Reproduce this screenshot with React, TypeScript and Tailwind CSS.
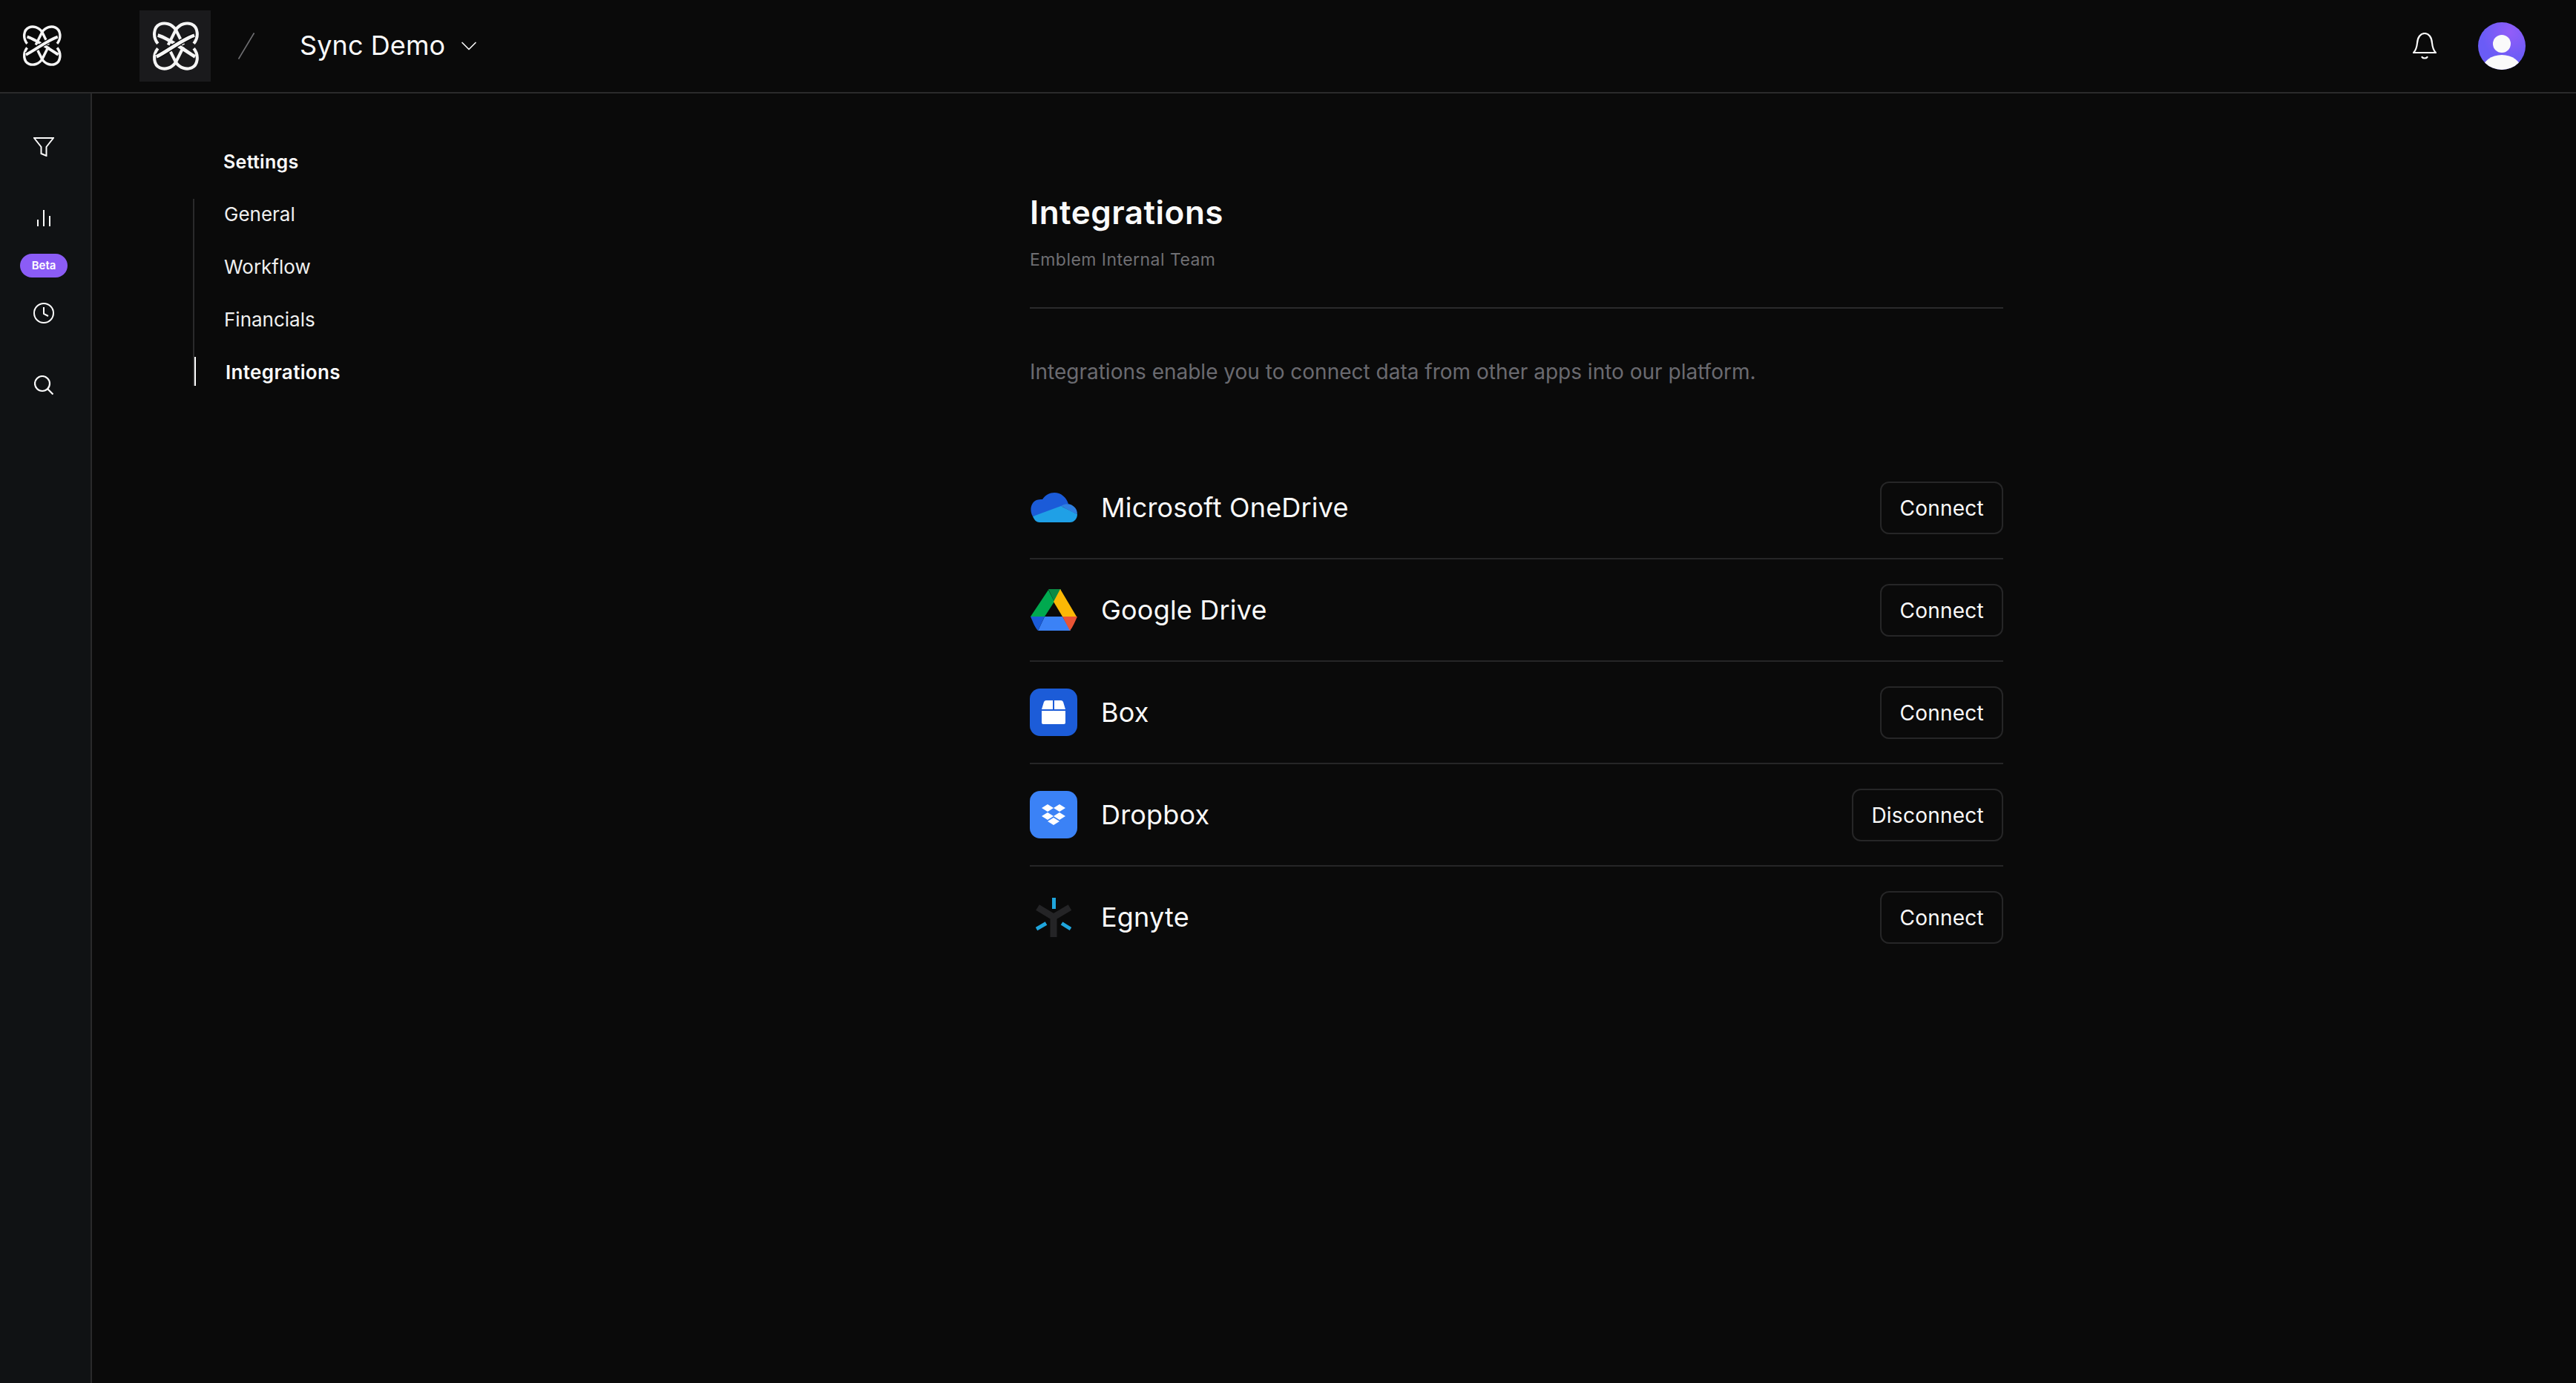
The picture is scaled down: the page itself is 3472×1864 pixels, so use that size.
import { ReactNode } from "react"
import { ChevronDown } from "lucide-react"

function Logo({ className }: { className: string }) {
	const strands = (
		<>
			<path d="M33 10C27 1 17-1 10 2C1 6-1 20 7 30" />
			<path d="M33 10L22 32" />
		</>
	)
	return (
		<svg viewBox="-2 -2 68 72" className={className} fill="none" stroke="#f5f5f5" strokeWidth="4.4">
			<g>{strands}</g>
			<g transform="matrix(-1 0 0 1 66 0)">{strands}</g>
			<g transform="matrix(1 0 0 -1 0 67)">{strands}</g>
			<g transform="matrix(-1 0 0 -1 66 67)">{strands}</g>
			<path d="M7 18C22 22 46 40 61 49" strokeWidth="5" />
			<path d="M60 18C42 24 20 42 5 49" stroke="#0a0a0a" strokeWidth="8" />
			<path d="M60 18C42 24 20 42 5 49" strokeWidth="5" />
		</svg>
	)
}

function OneDriveIcon() {
	return (
		<svg viewBox="0 0 63 40" className="h-[40px] w-[63px]">
			<path fill="#1b5bd8" d="M3 32C-1 26-1 14 8 10C11 9 13 9 16 9C20 3 26 0 32 0C41 0 48 6 51 15L30 26Z" />
			<path fill="#1fa0e6" d="M3 32L41 18L63 29C63 35 59 40 53 40L12 40C8 40 5 37 3 32Z" />
			<path fill="#2f7fe0" d="M41 18C45 15 52 14 56 17C61 20 63 24 63 29C57 27 49 22 41 18Z" />
		</svg>
	)
}

function DriveIcon() {
	return (
		<svg viewBox="0 0 63 56" className="h-[56px] w-[63px]">
			<path fill="#00a94f" d="M24 1L32 17L19 37L0 37Z" />
			<path fill="#0b8a45" d="M24 0L41 0L32 17Z" />
			<path fill="#fbb805" d="M40 0L62 37L43 37L31 17Z" />
			<path fill="#3b82f6" d="M19 37L43 37L54 56L10 56Z" />
			<path fill="#1b5bd8" d="M0 37L19 37L10 56C6 52 3 44 0 37Z" />
			<path fill="#ea5435" d="M43 37L63 37C60 44 57 51 53 56Z" />
		</svg>
	)
}

function BoxIcon() {
	return (
		<svg viewBox="0 0 64 64" className="h-[64px] w-[64px]">
			<rect width="64" height="64" rx="14" fill="#1c5cd8" />
			<path fill="#fff" d="M19 18Q20 16 22 16L31 16L31 28L16 28ZM33 16L42 16Q44 16 45 18L48 28L33 28ZM16 30L48 30L48 46Q48 48 46 48L18 48Q16 48 16 46Z" />
		</svg>
	)
}

function DropboxIcon() {
	return (
		<svg viewBox="0 0 64 64" className="h-[64px] w-[64px]">
			<rect width="64" height="64" rx="14" fill="#3b82f6" />
			<path fill="#fff" d="M16 23L24 18L32 23L24 28ZM32 23L40 18L48 23L40 28ZM16 34L24 29L32 34L24 39ZM32 34L40 29L48 34L40 39ZM24 41L32 36L40 41L32 46Z" />
		</svg>
	)
}

function EgnyteIcon() {
	return (
		<svg viewBox="0 0 48 54" className="h-[54px] w-[48px]" fill="none">
			<path d="M2.5 14L24 27L46 14M24 27L24 54" stroke="#242426" strokeWidth="9" />
			<path d="M24.5 1L24.5 16M1 43L14 35.5M47 43L35 35.5" stroke="#1fa5dc" strokeWidth="5" />
		</svg>
	)
}

function Avatar() {
	return (
		<svg viewBox="0 0 64 64" className="h-[64px] w-[64px]">
			<defs>
				<radialGradient id="avatarBg" cx="0.68" cy="0.22" r="0.6">
					<stop offset="0" stopColor="#925df8" />
					<stop offset="1" stopColor="#6a5cf6" />
				</radialGradient>
				<clipPath id="avatarClip">
					<circle cx="32" cy="32" r="32" />
				</clipPath>
			</defs>
			<circle cx="32" cy="32" r="32" fill="url(#avatarBg)" />
			<circle cx="32" cy="29" r="12" fill="#fafafa" />
			<ellipse cx="32" cy="64" rx="26" ry="20" fill="#fafafa" clipPath="url(#avatarClip)" />
		</svg>
	)
}

const navItems = ["General", "Workflow", "Financials"]

const integrations: { name: string; icon: ReactNode; action: string }[] = [
	{ name: "Microsoft OneDrive", icon: <OneDriveIcon />, action: "Connect" },
	{ name: "Google Drive", icon: <DriveIcon />, action: "Connect" },
	{ name: "Box", icon: <BoxIcon />, action: "Connect" },
	{ name: "Dropbox", icon: <DropboxIcon />, action: "Disconnect" },
	{ name: "Egnyte", icon: <EgnyteIcon />, action: "Connect" },
]

export default function App() {
	return (
		<div className="flex h-[1864px] w-[3472px] flex-col overflow-hidden bg-[#0a0a0a] font-[Inter,sans-serif] text-[#fafafa] antialiased">
			{/* top bar */}
			<header className="flex h-[126px] shrink-0 items-center border-b-2 border-[#2a2a2b] pr-[68px] pl-[29px]">
				<Logo className="h-[56px] w-[54px]" />
				<div className="ml-[105px] flex h-[96px] w-[96px] items-center justify-center bg-[#1a1a1c]">
					<Logo className="h-[67px] w-[64px]" />
				</div>
				<svg viewBox="0 0 22 36" className="ml-[37px] h-[36px] w-[22px]" fill="none">
					<path d="M21.5 0.5L0.5 35.5" stroke="#6f6f72" strokeWidth="1.6" />
				</svg>
				<span className="mb-[2px] ml-[61px] text-[36px] leading-[44px] tracking-[0.1px]">Sync Demo</span>
				<ChevronDown className="ml-[14px] h-[36px] w-[36px]" strokeWidth={1.1} />
				<svg viewBox="0 0 32 36" className="ml-auto h-[36px] w-[32px]" fill="none" stroke="#fafafa" strokeWidth="2.2">
					<path d="M1 27L31 27C27 23 26.5 19 26 14C25.5 6 21.5 1 16 1C10.5 1 6.5 6 6 14C5.5 19 5 23 1 27Z" strokeLinejoin="round" />
					<path d="M12.5 33C14 35 18 35 19.5 33" strokeLinecap="round" />
				</svg>
				<div className="ml-[56px]">
					<Avatar />
				</div>
			</header>

			<div className="flex min-h-0 flex-1">
				{/* icon rail */}
				<aside className="flex w-[124px] shrink-0 flex-col items-center border-r-2 border-[#2a2a2b] bg-[#101214] pt-[59px] pr-[4px]">
					<svg viewBox="0 0 28 26" className="h-[26px] w-[28px]" fill="none" stroke="#fafafa" strokeWidth="2">
						<path d="M1 1L27 1L17.5 13L17.5 25L10.5 22L10.5 13Z" />
					</svg>
					<svg viewBox="0 0 18 22" className="mt-[72px] h-[22px] w-[18px]" fill="none" stroke="#fafafa" strokeWidth="2">
						<path d="M1 22L1 13M9 22L9 0M17 22L17 8" />
					</svg>
					<div className="mt-[37px] flex h-[32px] w-[64px] items-center justify-center rounded-full bg-[#8b5cf6] text-[15px] font-semibold text-white">
						Beta
					</div>
					<svg viewBox="0 0 28 28" className="mt-[34px] h-[28px] w-[28px]" fill="none" stroke="#fafafa" strokeWidth="2">
						<circle cx="14" cy="14" r="13" />
						<path d="M14 6L14 15L20 18" />
					</svg>
					<svg viewBox="0 0 26 26" className="mt-[70px] h-[26px] w-[26px]" fill="none" stroke="#fafafa" strokeWidth="2.2">
						<circle cx="11" cy="11" r="10" />
						<path d="M18 18L25.5 25.5" />
					</svg>
				</aside>

				<main className="flex min-w-0 flex-1">
					{/* settings nav */}
					<nav className="w-[1264px] shrink-0 pt-[72px] pl-[136px]">
						<div className="ml-[41px] text-[25px] leading-[40px] font-semibold tracking-[0.3px]">Settings</div>
						<div className="mt-[30px] flex flex-col gap-[32px] border-l-2 border-[#2a2a2b] text-[26px] text-[#f0f0f0]">
							{navItems.map((item) => (
								<div key={item} className="flex h-[39px] items-center pt-[2px] pl-[40px]">
									{item}
								</div>
							))}
							<div className="flex h-[39px] items-center border-l-2 border-white pt-[2px] pl-[40px] font-semibold tracking-[0.35px] text-[#fafafa]">
								Integrations
							</div>
						</div>
					</nav>

					{/* integrations list */}
					<section className="w-[1312px] shrink-0 pt-[132px]">
						<div className="border-b-2 border-[#2a2a2b] pb-[48px]">
							<h1 className="text-[44px] leading-[56px] font-semibold tracking-[0.5px]">Integrations</h1>
							<p className="mt-[20px] text-[23px] leading-[32px] tracking-[0.45px] text-[#6f6f73]">Emblem Internal Team</p>
						</div>
						<p className="mt-[65px] text-[28px] leading-[40px] text-[#6a6a70]">
							Integrations enable you to connect data from other apps into our platform.
						</p>
						<ul className="mt-[95px]">
							{integrations.map((row, i) => (
								<li
									key={row.name}
									className={
										i < integrations.length - 1
											? "flex h-[138px] items-center border-b-2 border-[#262627]"
											: "flex h-[138px] items-center pb-[2px]"
									}
								>
									<div className="flex w-[64px] justify-center">{row.icon}</div>
									<span className="ml-[32px] text-[36px] tracking-[0.2px]">{row.name}</span>
									<button className="ml-auto h-[71px] rounded-[12px] border-2 border-[#262627] px-[24px] pt-[2px] text-[28px] tracking-[0.25px] text-[#fafafa]">
										{row.action}
									</button>
								</li>
							))}
						</ul>
					</section>
				</main>
			</div>
		</div>
	)
}
